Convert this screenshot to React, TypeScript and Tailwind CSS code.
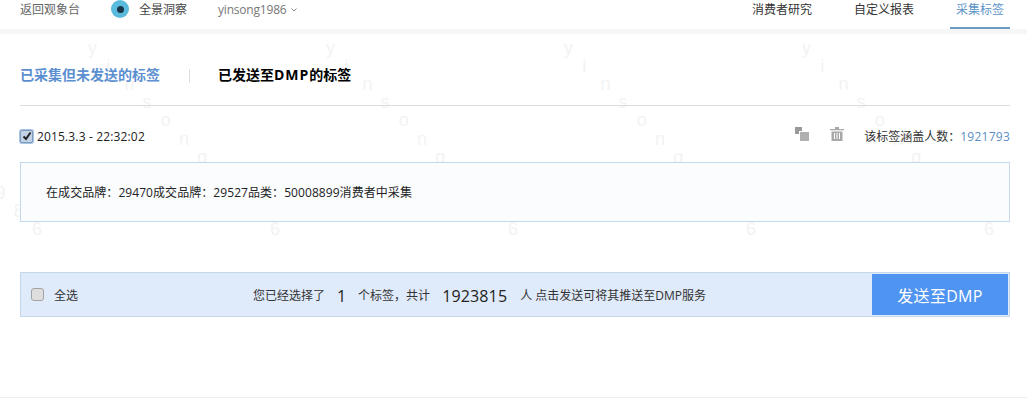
const cjk = "font-['Open_Sans','Noto_Sans_CJK_SC',sans-serif]";

const letters = "yinsong1986".split("");
const columns = [-145, 93, 331, 569, 807];

function Watermark() {
  return (
    <div className="absolute inset-0 overflow-hidden pointer-events-none select-none">
      {columns.map((left) =>
        letters.map((ch, i) => {
          const x = left + i * 18.2 - 5;
          // letters that fall fully off the page are skipped
          if (x < -10) return null;
          return (
            <span
              key={left + "-" + i}
              className="absolute text-[18px] leading-[20px] text-[#f3f3f3] font-['Liberation_Sans',sans-serif]"
              style={{ left: x, top: 38 + i * 18.1 }}
            >
              {ch}
            </span>
          );
        })
      )}
    </div>
  );
}

function Checkbox({ checked }: { checked?: boolean }) {
  if (checked) {
    return (
      <span className="flex items-center justify-center w-[13px] h-[13px] rounded-[2px] border border-[#7f9db9] bg-[#c3d3e6] shadow-[0_0_0_1px_#a9c4e6]">
        <svg width="10" height="10" viewBox="0 0 10 10">
          <path d="M1.500 5.500 L4 8 L8.500 1.500" fill="none" stroke="#222" strokeWidth="2" />
        </svg>
      </span>
    );
  }
  return <span className="block w-[13px] h-[13px] rounded-[3px] border border-[#a3a3a3] bg-[#dedede]" />;
}

export default function App() {
  return (
    <div className={"relative w-[1027px] h-[402px] bg-white overflow-hidden text-[12px] text-[#333] " + cjk}>
      <Watermark />
      <div className="relative flex flex-col h-full">
        <header className="flex items-start h-[34px] border-b-[5px] border-[#f6f6f6] bg-white">
          <a className="ml-5 mt-[1px] leading-[17px] text-[#666]">返回观象台</a>
          <span className="ml-[31px] flex items-center justify-center w-[18px] h-[18px] rounded-full bg-[#5bbbdc]">
            <span className="block w-[7px] h-[7px] rounded-full bg-[#17364a]" />
          </span>
          <span className="ml-[10px] mt-[1px] leading-[17px] text-[#444]">全景洞察</span>
          <span className="ml-[31px] mt-[1px] leading-[17px] text-[#777] tracking-[-0.2px] flex items-center">
            yinsong1986
            <svg className="ml-1" width="6" height="4" viewBox="0 0 6 4">
              <path d="M0.500 0.500 L3 3 L5.500 0.500" fill="none" stroke="#888" />
            </svg>
          </span>
          <nav className="ml-auto mr-[17px] flex h-[29px]">
            <span className="mt-[1px] leading-[17px] text-[#333]">消费者研究</span>
            <span className="ml-[42px] mt-[1px] leading-[17px] text-[#333]">自定义报表</span>
            <span className="ml-[36px] w-[60px] h-[29px] pt-[1px] text-center leading-[17px] text-[#5b93c7] border-b-2 border-[#6b9ac4]">采集标签</span>
          </nav>
        </header>

        <div className="ml-5 mr-[17px] mt-[29px] h-[43px] flex items-start border-b border-[#dcdcdc]">
          <span className="text-[14px] leading-[24px] font-bold text-[#5b8fd0]">已采集但未发送的标签</span>
          <span className="ml-[29px] mt-[6px] w-px h-[14px] bg-[#ddd]" />
          <span className="ml-[28px] text-[14px] leading-[24px] font-bold text-black">
            已发送至<span className="tracking-[1px]">DMP</span>的标签
          </span>
        </div>

        <div className="ml-5 mr-[17px] mt-[22px] h-[16px] flex items-center">
          <Checkbox checked />
          <span className="ml-[4px] pt-[2px] text-[#222] tracking-[0.15px]">2015.3.3 - 22:32:02</span>
          <svg className="ml-auto -mt-[4px]" width="14" height="14" viewBox="0 0 14 14">
            <path d="M0 0h7v4H4v3H0z" fill="#9a9a9a" />
            <path d="M5 5h9v9H5z" fill="#b0b0b0" />
          </svg>
          <svg className="ml-[21px] -mt-[4px]" width="14" height="14" viewBox="0 0 14 14">
            <path d="M0 2h14v1.200H0zM5 0h4v2H5zM1.500 4.500h11V14h-11z" fill="#a8a8a8" />
            <path d="M4.500 6v6M7 6v6M9.500 6v6" stroke="#fff" strokeWidth="1" />
          </svg>
          <span className="ml-[20px] pt-[2px] text-[#333]">
            该标签涵盖人数：<span className="text-[#5b8fc4] tracking-[0.25px]">1921793</span>
          </span>
        </div>

        <div className="ml-5 mr-[17px] mt-[18px] h-[60px] flex items-center pl-[25px] pt-[2px] bg-[#fbfcfe] border border-[#c5d7ea] text-[#222] tracking-[0.065px]">
          在成交品牌：29470成交品牌：29527品类：50008899消费者中采集
        </div>

        <div className="ml-5 mr-[17px] mt-[50px] h-[45px] flex items-center pl-[10px] pr-[1px] bg-[#dfeafa] border border-[#c5d7ea] text-[#333]">
          <Checkbox />
          <span className="ml-[10px] pt-[2px]">全选</span>
          <div className="flex-1 flex items-center justify-center pl-[9px] pt-[2px]">
            <span>您已经选择了</span>
            <span className="mx-[12px] text-[16px] text-[#222]">1</span>
            <span>个标签，共计</span>
            <span className="ml-[12px] mr-[13px] text-[16px] text-[#222] tracking-[0.15px]">1923815</span>
            <span>人 点击发送可将其推送至DMP服务</span>
          </div>
          <button className="w-[136px] h-[41px] pt-[2px] bg-[#4f94f0] text-white text-[16px] tracking-[0.3px]">发送至DMP</button>
        </div>

        <div className="mt-auto mb-[4px] border-b border-[#eeeeee]" />
      </div>
    </div>
  );
}
